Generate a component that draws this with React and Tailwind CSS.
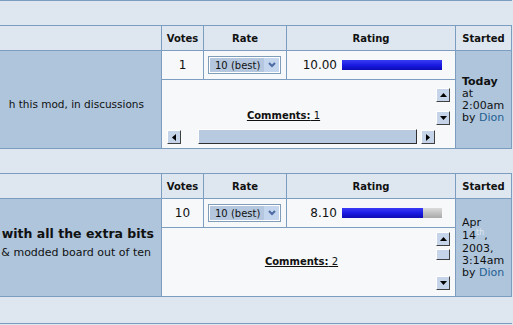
import React from "react";

const BORDER = "bg-[#7c9cc0]";

function Tri({ dir }) {
  const pts = {
    up: "0,4 7,4 3.5,0",
    down: "0,0 7,0 3.5,4",
    left: "4,0 4,7 0,3.5",
    right: "0,0 0,7 4,3.5",
  }[dir];
  const vertical = dir === "up" || dir === "down";
  return (
    <svg width={vertical ? 7 : 4} height={vertical ? 4 : 7} viewBox={vertical ? "0 0 7 4" : "0 0 4 7"}>
      <polygon points={pts} fill="#000" />
    </svg>
  );
}

function Btn({ dir }) {
  return (
    <div className="flex h-[14px] w-[14px] items-center justify-center border border-t-white border-l-white border-r-[#404040] border-b-[#404040] bg-[#c5d4e8]">
      <Tri dir={dir} />
    </div>
  );
}

function Select() {
  return (
    <div className="flex h-[18px] w-[73px] border border-[#7f9db9] bg-white p-px">
      <div className="flex flex-1 items-center bg-[#b4c7de] pl-[5px] text-[10px] text-[#111]">10 (best)</div>
      <div className="flex w-[15px] items-center justify-center bg-[#c4d5ee]">
        <svg width="8" height="6" viewBox="0 0 8 6">
          <polyline points="1,1 4,4 7,1" fill="none" stroke="#4d6aa3" strokeWidth="2" />
        </svg>
      </div>
    </div>
  );
}

function Bar({ value }) {
  return (
    <div className="ml-[5px] h-[10px] w-[100px] bg-linear-to-b from-[#dcdcdc] to-[#a9a9a9]">
      <div
        className="h-full bg-linear-to-b from-[#3a3af4] via-[#1a1ae4] to-[#0c0cb4]"
        style={{ width: `${value * 10}%` }}
      />
    </div>
  );
}

function Header() {
  return (
    <>
      <div className="bg-[#dee6f0]" />
      <div className="flex items-center justify-center bg-[#dee6f0] text-[10px] font-bold text-[#111]">Votes</div>
      <div className="flex items-center justify-center bg-[#dee6f0] text-[10px] font-bold text-[#111]">Rate</div>
      <div className="flex items-center justify-center bg-[#dee6f0] text-[10px] font-bold text-[#111]">Rating</div>
      <div className="flex items-center justify-center bg-[#dee6f0] text-[10px] font-bold text-[#111]">Started</div>
    </>
  );
}

function Section1() {
  return (
    <div className={`grid w-[512px] grid-cols-[161px_41px_82px_168px_55px] grid-rows-[24px_28px_68px] gap-px py-px pr-px ${BORDER}`}>
      <Header />
      <div className="row-span-2 flex flex-col justify-center overflow-hidden whitespace-nowrap bg-[#aec5dc] pt-[8px]">
        <div className="flex justify-end pr-[17px] text-[10.5px] leading-[12px] text-[#111]">h this mod, in discussions</div>
      </div>
      <div className="flex items-center justify-center bg-[#f6f8fa] text-[12px] text-[#111]">1</div>
      <div className="flex items-center bg-[#f6f8fa] pl-[4px]">
        <Select />
      </div>
      <div className="flex items-center bg-[#f6f8fa]">
        <span className="w-[50px] text-right text-[12px] text-[#111]">10.00</span>
        <Bar value={10} />
      </div>
      <div className="row-span-2 flex flex-col justify-center bg-[#aec5dc] pl-[6px] text-[11px] leading-[12px] text-[#111]">
        <div className="font-bold">Today</div>
        <div>at</div>
        <div>2:00am</div>
        <div>
          by <span className="text-[#1f5f91]">Dion</span>
        </div>
      </div>
      <div className="col-span-3 col-start-2 bg-[#f6f8fa] pt-[8px] pr-[4px] pb-[4px] pl-[5px]">
        <div className="grid h-full grid-cols-[1fr_15px] grid-rows-[1fr_15px]">
          <div className="flex items-center justify-center pt-[14px] pr-[36px]">
            <span className="text-[10px] text-[#111] underline">
              <b>Comments:</b> 1
            </span>
          </div>
          <div className="flex flex-col gap-[9px]">
            <Btn dir="up" />
            <Btn dir="down" />
          </div>
          <div className="flex items-end">
            <Btn dir="left" />
            <div className="ml-[17px] h-[15px] w-[219px] border border-t-white border-l-white border-r-[#303030] border-b-[#303030] bg-[#b8cadf]" />
            <div className="ml-[4px]">
              <Btn dir="right" />
            </div>
          </div>
          <div />
        </div>
      </div>
    </div>
  );
}

function Section2() {
  return (
    <div className={`grid w-[512px] grid-cols-[161px_41px_82px_168px_55px] grid-rows-[24px_28px_68px] gap-px py-px pr-px ${BORDER}`}>
      <Header />
      <div className="row-span-2 flex flex-col justify-center gap-[6px] overflow-hidden whitespace-nowrap bg-[#aec5dc] pb-[9px]">
        <div className="flex justify-end pr-[7px] text-[12.5px] leading-[14px] font-bold text-[#111]">with all the extra bits</div>
        <div className="flex justify-end pr-[10px] text-[11px] leading-[12px] text-[#111]">&amp; modded board out of ten</div>
      </div>
      <div className="flex items-center justify-center bg-[#f6f8fa] text-[12px] text-[#111]">10</div>
      <div className="flex items-center bg-[#f6f8fa] pl-[4px]">
        <Select />
      </div>
      <div className="flex items-center bg-[#f6f8fa]">
        <span className="w-[50px] text-right text-[12px] text-[#111]">8.10</span>
        <Bar value={8.1} />
      </div>
      <div className="row-span-2 flex flex-col justify-center bg-[#aec5dc] pl-[6px] text-[11px] leading-[12px] text-[#111]">
        <div>Apr</div>
        <div className="leading-[14px]">
          14<sup className="text-[8px] text-[#dfe6f0]">th</sup>,
        </div>
        <div>2003,</div>
        <div>3:14am</div>
        <div>
          by <span className="text-[#1f5f91]">Dion</span>
        </div>
      </div>
      <div className="col-span-3 col-start-2 bg-[#f6f8fa] pt-[4px] pr-[4px] pb-[5px] pl-[5px]">
        <div className="grid h-full grid-cols-[1fr_15px]">
          <div className="flex items-center justify-center">
            <span className="text-[10px] text-[#111] underline">
              <b>Comments:</b> 2
            </span>
          </div>
          <div className="flex flex-col">
            <Btn dir="up" />
            <div className="mt-[3px] h-[11px] w-[14px] border border-t-white border-l-white border-r-[#404040] border-b-[#404040] bg-[#c5d4e8]" />
            <div className="mt-[16px]">
              <Btn dir="down" />
            </div>
          </div>
        </div>
      </div>
    </div>
  );
}

export default function App() {
  return (
    <div className="h-[325px] w-[513px] overflow-hidden bg-[#dee6f0] font-['DejaVu_Sans',sans-serif] text-black">
      <div className={`h-px w-[512px] ${BORDER}`} />
      <div className="h-[24px]" />
      <Section1 />
      <div className="h-[24px]" />
      <Section2 />
      <div className="h-[26px]" />
      <div className={`h-px w-[512px] ${BORDER}`} />
    </div>
  );
}
